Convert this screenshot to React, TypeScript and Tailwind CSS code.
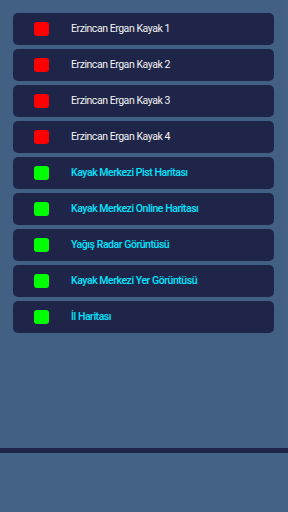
import React from "react";

const items = [
  { label: "Erzincan Ergan Kayak 1", ok: false },
  { label: "Erzincan Ergan Kayak 2", ok: false },
  { label: "Erzincan Ergan Kayak 3", ok: false },
  { label: "Erzincan Ergan Kayak 4", ok: false },
  { label: "Kayak Merkezi Pist Haritası", ok: true },
  { label: "Kayak Merkezi Online Haritası", ok: true },
  { label: "Yağış Radar Görüntüsü", ok: true },
  { label: "Kayak Merkezi Yer Görüntüsü", ok: true },
  { label: "İl Haritası", ok: true },
];

export default function App() {
  return (
    <div
      className="w-[288px] h-[512px] bg-[#446287] flex flex-col overflow-hidden"
      style={{ fontFamily: "Roboto, 'Noto Sans', sans-serif" }}
    >
      <div className="h-[448px] w-[284px] bg-[#416084] rounded-br-[4px] rounded-bl-[4px] pt-[13px] px-[13px] flex flex-col gap-[4px]">
        {items.map((it) => (
          <div
            key={it.label}
            className="h-[32px] w-[261px] bg-[#1f2549] rounded-[5px] flex items-center pl-[21px]"
          >
            <div
              className={
                it.ok
                  ? "w-[15px] h-[14px] rounded-[3px] bg-[#00ff00]"
                  : "w-[15px] h-[14px] rounded-[3px] bg-[#ff0000]"
              }
            />
            <span
              className={
                it.ok
                  ? "ml-[22px] text-[10.5px] font-medium text-[#00e5ff] tracking-[-0.45px]"
                  : "ml-[22px] text-[10.5px] text-[#f2f2f2] tracking-[-0.45px]"
              }
            >
              {it.label}
            </span>
          </div>
        ))}
      </div>
      <div className="h-[5px] w-full bg-[#1f2549]" />
    </div>
  );
}
